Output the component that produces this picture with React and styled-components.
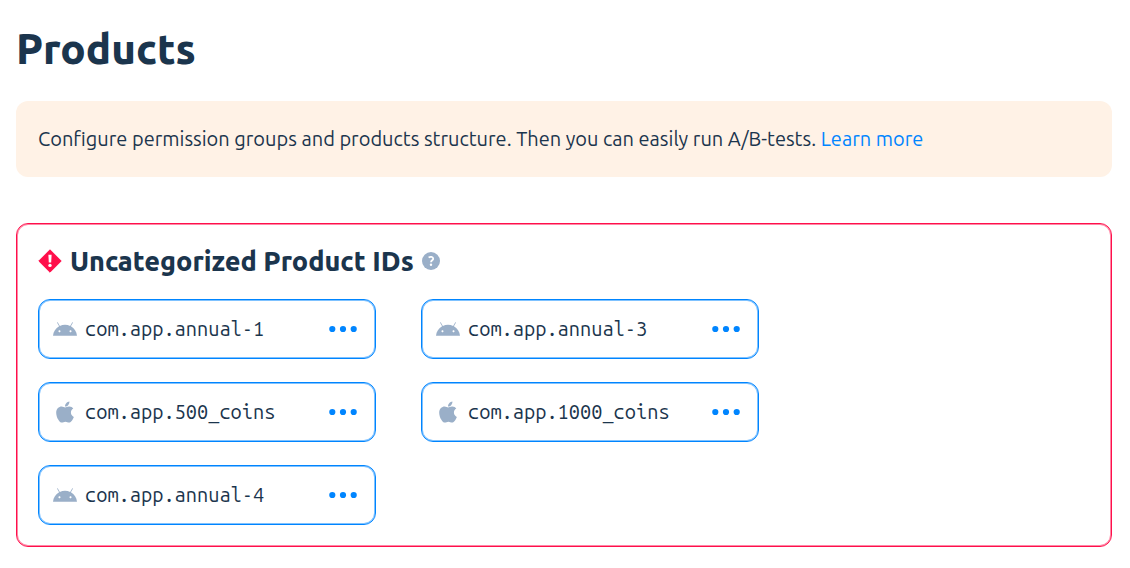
import React from "react";
import styled, { createGlobalStyle } from "styled-components";
import { FaApple } from "react-icons/fa";

const ink = "#1b354d";
const blue = "#0085ff";
const red = "#ff0f4b";
const muted = "#9aafc8";
const sans = `Ubuntu, "Noto Sans", sans-serif`;
const mono = `"Ubuntu Mono", "DejaVu Sans Mono", monospace`;

const GlobalStyle = createGlobalStyle`
  * { box-sizing: border-box; }
  body { margin: 0; background: #fff; color: ${ink}; font-family: ${sans}; }
`;

const Page = styled.main`
  padding: 20px 18px 20px 16px;
`;

const Title = styled.h1`
  margin: 0 0 24px;
  font-size: 42px;
  line-height: 57px;
  font-weight: 800;
`;

const Banner = styled.p`
  margin: 0 0 46px;
  padding: 24px 22px;
  border-radius: 12px;
  background: #fff2e6;
  font-size: 20px;
  line-height: 28px;
`;

const Link = styled.a`
  color: ${blue};
  text-decoration: none;
`;

const Panel = styled.section`
  padding: 21px;
  border: 1px solid ${red};
  border-radius: 12px;
  box-shadow: inset 0 0 0 1px ${red}80;
`;

const PanelHeader = styled.header`
  display: flex;
  align-items: center;
  gap: 8px;
  height: 32px;
  margin-bottom: 22px;
`;

const PanelTitle = styled.h2`
  margin: 0;
  font-size: 27px;
  line-height: 32px;
  font-weight: 800;
`;

const IconButton = styled.button`
  display: flex;
  padding: 0;
  border: 0;
  background: none;
  color: ${(p) => p.$color};
  cursor: pointer;
`;

const ProductList = styled.ul`
  display: grid;
  grid-template-columns: repeat(auto-fill, 338px);
  gap: 23px 45px;
  margin: 0;
  padding: 0;
  list-style: none;
`;

const ProductCard = styled.li`
  display: flex;
  align-items: center;
  gap: 8px;
  height: 60px;
  padding: 0 18px 0 14px;
  border: 1px solid ${blue};
  border-radius: 12px;
  box-shadow: inset 0 0 0 1px ${blue}80;
`;

const Platform = styled.span`
  display: flex;
  justify-content: center;
  width: 24px;
  color: ${muted};
`;

const ProductId = styled.span`
  flex: 1;
  font-family: ${mono};
  font-size: 20px;
  line-height: 26px;
`;

const AlertIcon = () => (
  <svg width="24" height="24" viewBox="0 0 24 24" aria-hidden="true">
    <path d="M12 0.8 23.2 12 12 23.2 0.8 12Z" fill={red} stroke={red} strokeWidth="1" strokeLinejoin="round" />
    <path d="M10.4 5.8h3.2l-.4 7.8h-2.4Z" fill="#fff" />
    <circle cx="12" cy="16.4" r="1.7" fill="#fff" />
  </svg>
);

const HelpIcon = () => (
  <svg width="18" height="18" viewBox="0 0 18 18" aria-hidden="true">
    <circle cx="9" cy="9" r="9" fill="currentColor" />
    <path d="M6.6 5.5c1.7-1.1 4.6-.8 4.6 1.2 0 1.6-2.2 1.6-2.2 3.5" fill="none" stroke="#fff" strokeWidth="1.8" />
    <circle cx="9" cy="12.7" r="1.2" fill="#fff" />
  </svg>
);

const AndroidIcon = () => (
  <svg width="24" height="24" viewBox="0 0 24 24" fill="currentColor" aria-hidden="true">
    <path d="M17.523 15.3414c-.5511 0-.9993-.4486-.9993-.9997s.4483-.9993.9993-.9993c.5511 0 .9993.4483.9993.9993.0001.5511-.4482.9997-.9993.9997m-11.046 0c-.5511 0-.9993-.4486-.9993-.9997s.4482-.9993.9993-.9993c.5511 0 .9993.4483.9993.9993 0 .5511-.4483.9997-.9993.9997m11.4045-6.02l1.9973-3.4592a.416.416 0 00-.1521-.5676.416.416 0 00-.5676.1521l-2.0223 3.503C15.5902 8.2439 13.8533 7.8508 12 7.8508s-3.5902.3931-5.1367 1.0989L4.841 5.4467a.4161.4161 0 00-.5677-.1521.4157.4157 0 00-.1521.5676l1.9973 3.4592C2.6889 11.1867.3432 14.6589 0 18.761h24c-.3435-4.1021-2.6892-7.5743-6.1185-9.4396" />
  </svg>
);

const DotsIcon = () => (
  <svg width="28" height="8" viewBox="0 0 28 8" fill="currentColor" aria-hidden="true">
    <circle cx="3.3" cy="4" r="3.1" />
    <circle cx="14" cy="4" r="3.1" />
    <circle cx="24.7" cy="4" r="3.1" />
  </svg>
);

const products = [
  { id: "com.app.annual-1", platform: "android" },
  { id: "com.app.annual-3", platform: "android" },
  { id: "com.app.500_coins", platform: "apple" },
  { id: "com.app.1000_coins", platform: "apple" },
  { id: "com.app.annual-4", platform: "android" },
];

export default function App() {
  return (
    <>
      <GlobalStyle />
      <Page>
        <Title>Products</Title>
        <Banner>
          Configure permission groups and products structure. Then you can easily run A/B-tests.{" "}
          <Link href="#learn-more">Learn more</Link>
        </Banner>
        <Panel aria-labelledby="uncategorized">
          <PanelHeader>
            <AlertIcon />
            <PanelTitle id="uncategorized">Uncategorized Product IDs</PanelTitle>
            <IconButton type="button" $color={muted} aria-label="Help">
              <HelpIcon />
            </IconButton>
          </PanelHeader>
          <ProductList>
            {products.map(({ id, platform }) => (
              <ProductCard key={id}>
                <Platform>{platform === "apple" ? <FaApple size={24} /> : <AndroidIcon />}</Platform>
                <ProductId>{id}</ProductId>
                <IconButton type="button" $color={blue} aria-label={`Actions for ${id}`}>
                  <DotsIcon />
                </IconButton>
              </ProductCard>
            ))}
          </ProductList>
        </Panel>
      </Page>
    </>
  );
}
